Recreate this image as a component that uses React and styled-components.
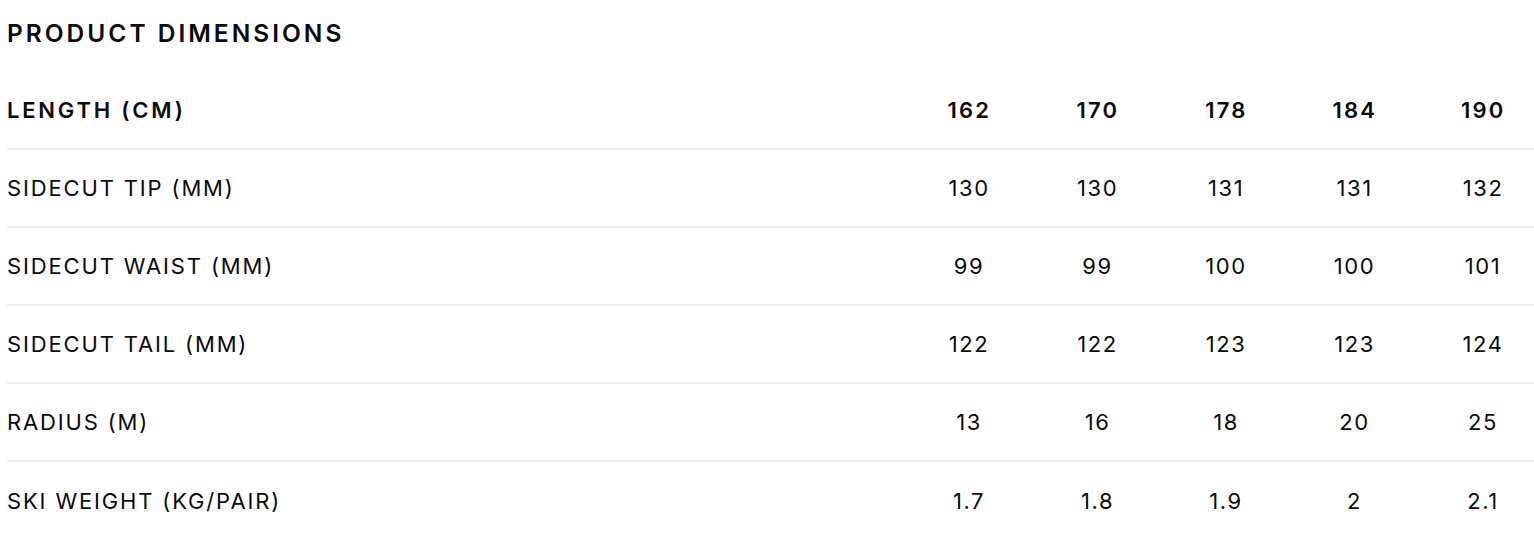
import React from 'react'
import styled, { createGlobalStyle } from 'styled-components'

const GlobalStyle = createGlobalStyle`
    html, body {
        margin: 0;
        padding: 0;
        background: #fff;
        overflow: hidden;
    }
    body {
        font-family: Inter, "Noto Sans", sans-serif;
        color: #0a0a0a;
    }
`

const Page = styled.div`
    padding: 0 0 0 7px;
`

const Title = styled.h2`
    margin: 0;
    height: 72px;
    display: flex;
    align-items: center;
    padding-bottom: 6px;
    box-sizing: border-box;
    font-size: 24.5px;
    font-weight: 600;
    letter-spacing: 3px;
`

const Row = styled.div`
    display: grid;
    grid-template-columns: 897px repeat(5, 128.5px);
    align-items: center;
    height: 78px;
    border-bottom: ${(p) => (p.$last ? 'none' : '2px solid #eeeeee')};
    box-sizing: border-box;
`

const Label = styled.div`
    font-size: 22px;
    font-weight: ${(p) => (p.$head ? 600 : 400)};
    letter-spacing: ${(p) => (p.$head ? '2.8px' : '1.85px')};
`

const Value = styled.div`
    text-align: center;
    font-size: 22px;
    font-weight: ${(p) => (p.$head ? 600 : 400)};
    letter-spacing: ${(p) => (p.$head ? '2.2px' : '1.6px')};
    text-indent: ${(p) => (p.$head ? '2.2px' : '1.6px')};
`

const rows = [
    ['SIDECUT TIP (MM)', ['130', '130', '131', '131', '132']],
    ['SIDECUT WAIST (MM)', ['99', '99', '100', '100', '101']],
    ['SIDECUT TAIL (MM)', ['122', '122', '123', '123', '124']],
    ['RADIUS (M)', ['13', '16', '18', '20', '25']],
    ['SKI WEIGHT (KG/PAIR)', ['1.7', '1.8', '1.9', '2', '2.1']],
]

export default function App() {
    return (
        <Page>
            <GlobalStyle />
            <Title>PRODUCT DIMENSIONS</Title>
            <Row $head>
                <Label $head>LENGTH (CM)</Label>
                {['162', '170', '178', '184', '190'].map((v) => (
                    <Value $head key={v}>
                        {v}
                    </Value>
                ))}
            </Row>
            {rows.map(([label, values], i) => (
                <Row key={label} $last={i === rows.length - 1}>
                    <Label>{label}</Label>
                    {values.map((v, j) => (
                        <Value key={j}>{v}</Value>
                    ))}
                </Row>
            ))}
        </Page>
    )
}
